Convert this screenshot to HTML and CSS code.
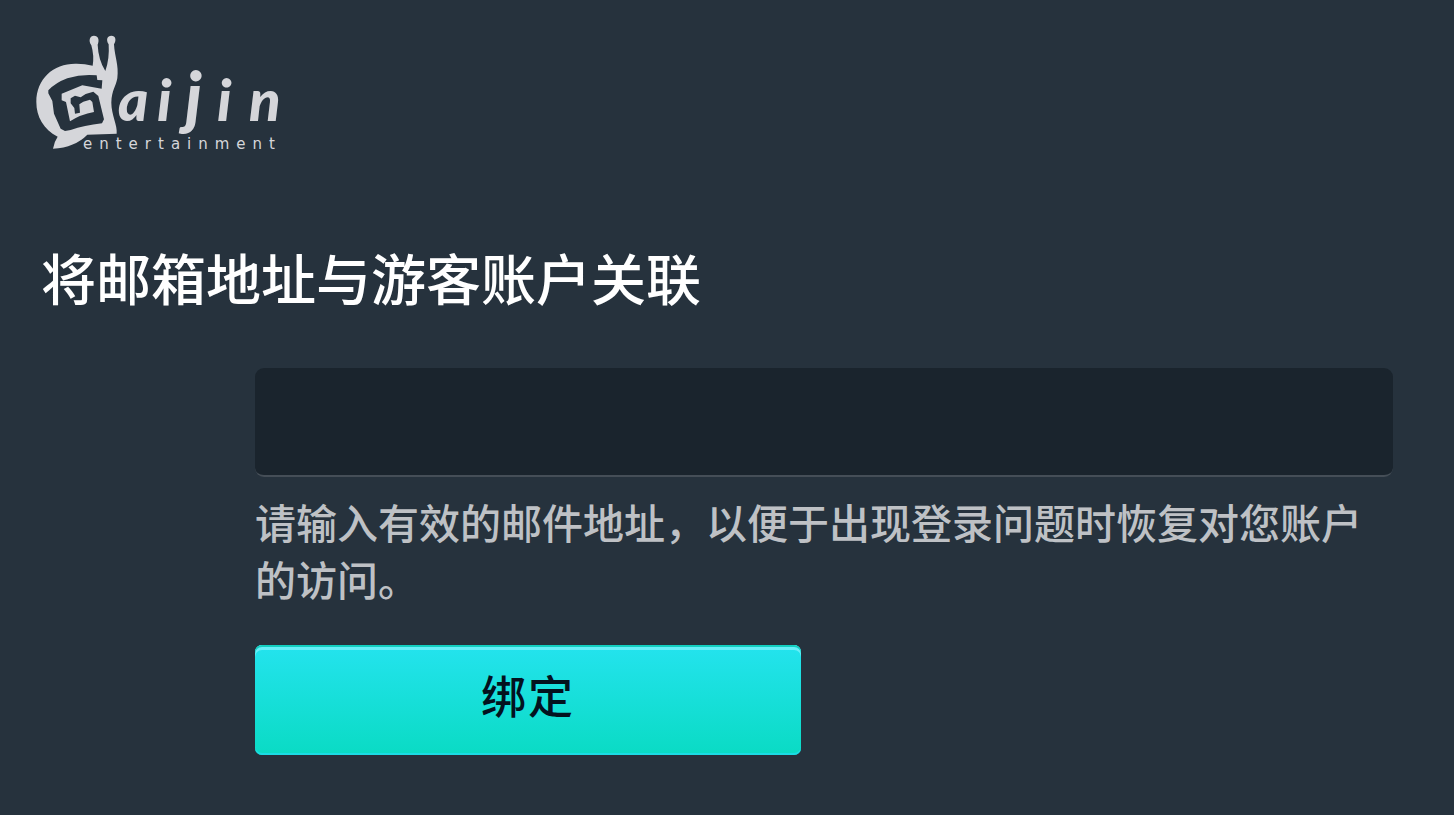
FILE: index.html
```html
<!DOCTYPE html>
<html lang="zh-CN">
<head>
<meta charset="utf-8">
<meta name="viewport" content="width=device-width, initial-scale=1">
<title>将邮箱地址与游客账户关联</title>
<link rel="stylesheet" href="styles.css">
</head>
<body>
<header class="header">
  <svg class="logo" viewBox="0 0 252 125" role="img" aria-label="Gaijin entertainment">
    <g transform="scale(.3333)">
      <path d="M69 356Q72 336 83 320C40 298 19 260 19 216C19 145 72 99 140 101Q165 101 188 107Q193 77 184 46C174 31 180 17 192 17C205 17 209 30 203 44Q205 89 226 123Q239 86 236 43C227 29 232 17 244 17C257 17 260 30 252 43C254 80 267 105 262 145C258 169 245 181 244 218C244 255 263 286 260 311L172 314Q135 352 69 356Z"/>
      <path class="logo-spiral" transform="translate(42 108)" d="M158 28L160 42L175 43L173 68L115 58L53 83L53 103L66 108L78 166Q110 145 150 138L145 108L138 101L118 107L106 115L108 140L93 143L91 126L80 112L80 97L93 89L110 94L125 84L148 77L163 90L180 160L174 172Q120 178 80 192L63 195L50 188L30 143L25 105L13 82L13 73Q35 50 70 37Q115 23 158 28Z"/>
    </g>
    <text class="logo-name" y="91"><tspan x="88">a</tspan><tspan x="127">i</tspan><tspan class="logo-tall" x="155">j</tspan><tspan x="187">i</tspan><tspan x="219">n</tspan></text>
    <text class="logo-sub" x="53" y="119">entertainment</text>
  </svg>
</header>
<main class="main">
  <h1 class="title" id="title">将邮箱地址与游客账户关联</h1>
  <form class="form">
    <input class="field" id="email" type="email" aria-labelledby="title" aria-describedby="hint">
    <p class="hint" id="hint">请输入有效的邮件地址，以便于出现登录问题时恢复对您账户的访问。</p>
    <button class="submit" type="submit">绑定</button>
  </form>
</main>
</body>
</html>
```
FILE: styles.css
```css
* {
  box-sizing: border-box;
}

body {
  margin: 0;
  min-height: 100vh;
  background: #26323d;
  color: #fff;
  font-family: "Noto Sans CJK SC", sans-serif;
  font-weight: 500;
}

.header {
  padding: 30px 30px 0;
}

.logo {
  display: block;
  width: 252px;
  fill: #d5d6da;
}

.logo-spiral {
  fill: #26323d;
}

.logo-name {
  font: italic 900 58px Lato, sans-serif;
}

.logo-tall {
  font-size: 68px;
}

.logo-sub {
  font: 500 15px "DejaVu Sans", sans-serif;
  letter-spacing: 7px;
}

.main {
  padding: 80px 61px 60px 41px;
}

.title {
  margin: 0;
  font-size: 55px;
  font-weight: 500;
  line-height: 82px;
}

.form {
  display: flex;
  flex-direction: column;
  align-items: flex-start;
  margin: 51px 0 0 214px;
}

.field {
  width: 100%;
  height: 109px;
  padding: 0 28px;
  border: 0;
  border-bottom: 2px solid #454e57;
  border-radius: 9px;
  outline: 0;
  background: #1a242d;
  color: #fff;
  font: inherit;
  font-size: 41px;
}

.hint {
  margin: 16px 0 0;
  color: #bec1c5;
  font-size: 41px;
  line-height: 57px;
}

.submit {
  width: 48%;
  height: 110px;
  margin-top: 38px;
  padding: 0 0 12px;
  border: 0;
  border-radius: 7px;
  background: linear-gradient(#24e3ee, #0adbc4);
  box-shadow: inset 0 2px #12cfc0, inset 0 5px #6aeef8, inset 0 -2px #1bdce4;
  color: #03121f;
  font: inherit;
  font-size: 45px;
  letter-spacing: 2px;
  cursor: pointer;
}
```
